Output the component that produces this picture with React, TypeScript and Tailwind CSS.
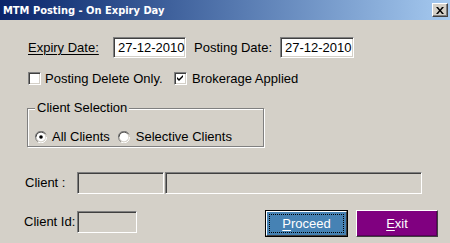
import React from 'react';

const sunken =
  'border border-t-[#808080] border-l-[#808080] border-b-white border-r-white shadow-[inset_1px_1px_0_#404040,inset_-1px_-1px_0_#d4d0c8]';

const CheckBox: React.FC<{ checked?: boolean }> = ({ checked }) => (
  <span className={`inline-flex h-[13px] w-[13px] shrink-0 items-center justify-center bg-white ${sunken}`}>
    {checked && (
      <svg width="7" height="7" viewBox="0 0 7 7">
        <path d="M0 2 L2 4 L6 0 L6 2 L2 6 L0 4 Z" fill="#000" />
      </svg>
    )}
  </span>
);

const Radio: React.FC<{ checked?: boolean }> = ({ checked }) => (
  <svg width="12" height="12" viewBox="0 0 12 12" className="shrink-0">
    <path d="M11 3.5 A5.5 5.5 0 0 0 0.5 6 A5.5 5.5 0 0 0 3 10.8" stroke="#808080" strokeWidth="1" fill="none" />
    <path d="M1 6 A5 5 0 0 1 9.5 2.5" stroke="#404040" strokeWidth="1" fill="none" />
    <path d="M11.5 6 A5.5 5.5 0 0 1 3 11" stroke="#ffffff" strokeWidth="1" fill="none" />
    <circle cx="6" cy="6" r="4.3" fill="#ffffff" />
    {checked && <circle cx="6" cy="6" r="1.8" fill="#000" />}
  </svg>
);

export default function App() {
  return (
    <div
      className="flex h-[243px] w-[450px] flex-col overflow-hidden whitespace-nowrap bg-[#d4d0c8] text-[13px] text-black"
      style={{ fontFamily: '"Liberation Sans", Arial, sans-serif' }}
    >
      {/* title bar */}
      <div className="flex h-[20px] shrink-0 items-center justify-between bg-gradient-to-r from-[#0a246a] to-[#a6caf0] pl-[3px] pr-[2px]">
        <span className="text-[11px] font-bold leading-none text-white" style={{ fontFamily: '"DejaVu Sans Condensed", "Liberation Sans", sans-serif' }}>
          MTM Posting - On Expiry Day
        </span>
        <span className="flex h-[14px] w-[16px] items-center justify-center border border-t-white border-l-white border-b-[#404040] border-r-[#404040] bg-[#d4d0c8] shadow-[inset_-1px_-1px_0_#808080]">
          <svg width="8" height="7" viewBox="0 0 8 7">
            <path d="M0 0 L2 0 L4 2.5 L6 0 L8 0 L5 3.5 L8 7 L6 7 L4 4.5 L2 7 L0 7 L3 3.5 Z" fill="#000" />
          </svg>
        </span>
      </div>

      {/* dates */}
      <div className="mt-[17px] flex h-[21px] items-center">
        <span className="ml-[28px] w-[85px] underline underline-offset-2">Expiry Date:</span>
        <span className={`flex h-[21px] w-[73px] items-center bg-white pl-[4px] ${sunken}`}>27-12-2010</span>
        <span className="ml-[8px] w-[86px]">Posting Date:</span>
        <span className={`flex h-[21px] w-[74px] items-center bg-white pl-[4px] ${sunken}`}>27-12-2010</span>
      </div>

      {/* checkboxes */}
      <div className="mt-[14px] flex h-[13px] items-center">
        <span className="ml-[28px] flex"><CheckBox /></span>
        <span className="ml-[4px] w-[129px]">Posting Delete Only.</span>
        <CheckBox checked />
        <span className="ml-[5px]">Brokerage Applied</span>
      </div>

      {/* client selection group */}
      <div className="ml-[27px] mt-[23px] h-[39px] w-[237px] border border-[#808080] shadow-[inset_1px_1px_0_#ffffff,1px_1px_0_#ffffff]">
        <div className="-mt-[9px] ml-[7px] w-fit bg-[#d4d0c8] px-[2px] leading-[16px]">Client Selection</div>
        <div className="mt-[14px] flex h-[14px] items-center pl-[7px]">
          <Radio checked />
          <span className="ml-[5px]">All Clients</span>
          <span className="ml-[8px] flex"><Radio /></span>
          <span className="ml-[6px]">Selective Clients</span>
        </div>
      </div>

      {/* client */}
      <div className="mt-[25px] flex h-[22px] items-center">
        <span className="ml-[25px] w-[52px]">Client :</span>
        <span className={`h-[22px] w-[87px] ${sunken}`} />
        <span className={`ml-[1px] h-[22px] w-[257px] ${sunken}`} />
      </div>

      {/* client id + buttons */}
      <div className="mt-[17px] flex items-start">
        <span className="ml-[24px] mt-[3px] w-[53px] leading-[16px]">Client Id:</span>
        <span className={`h-[22px] w-[60px] ${sunken}`} />
        <button className="ml-[128px] -mt-[1px] flex h-[27px] w-[83px] items-center justify-center border border-black bg-[#4682b4] p-0">
          <span className="flex h-full w-full items-center justify-center border border-t-white border-l-white border-b-[#404040] border-r-[#404040]">
            <span className="flex h-[19px] w-[75px] items-center justify-center border border-dotted border-black text-white">
              <span className="underline underline-offset-2">P</span>roceed
            </span>
          </span>
        </button>
        <button className="ml-[8px] -mt-[1px] flex h-[27px] w-[82px] items-center justify-center border border-t-white border-l-white border-b-[#404040] border-r-[#404040] bg-[#800080] p-0 text-white shadow-[inset_-1px_-1px_0_#5a005a]">
          <span className="underline underline-offset-2">E</span>xit
        </button>
      </div>
    </div>
  );
}
